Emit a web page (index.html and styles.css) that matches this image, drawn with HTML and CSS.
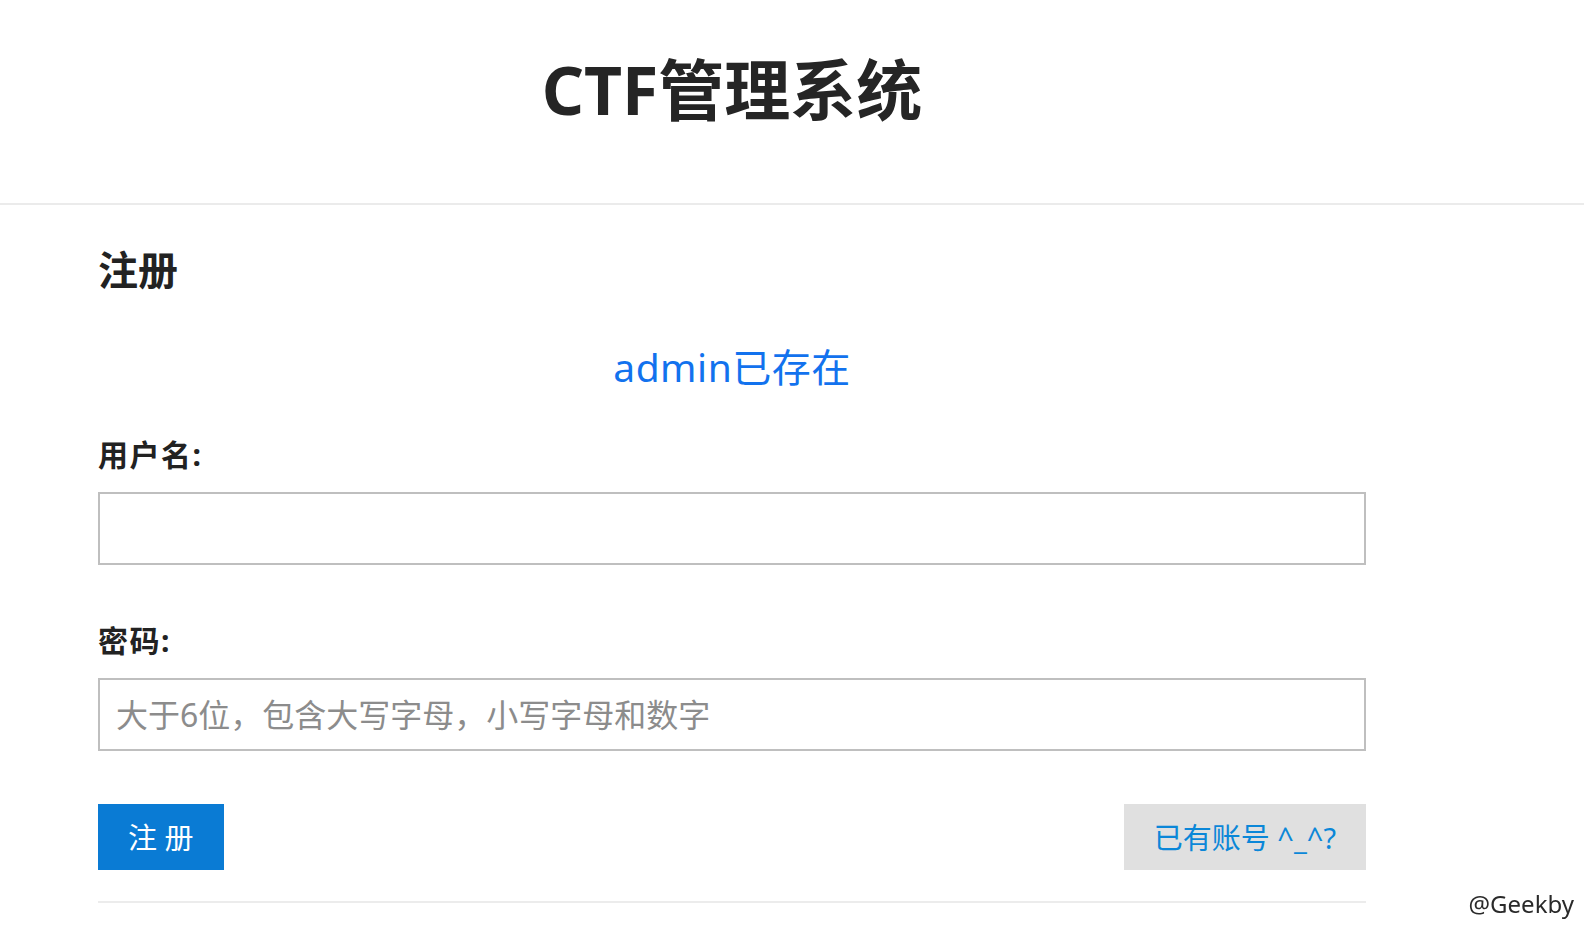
FILE: index.html
```html
<!DOCTYPE html>
<html lang="zh-CN">
<head>
<meta charset="utf-8">
<title>CTF管理系统</title>
<link rel="stylesheet" href="styles.css">
</head>
<body>
<header class="site-header">
  <div class="container">
    <h1 class="site-title">CTF管理系统</h1>
  </div>
</header>
<main class="container">
  <h2 class="page-title">注册</h2>
  <p class="message">admin已存在</p>
  <form class="form">
    <label class="field-label" for="username">用户名:</label>
    <input class="field-input" id="username" type="text">
    <label class="field-label second" for="password">密码:</label>
    <input class="field-input" id="password" type="password" placeholder="大于6位，包含大写字母，小写字母和数字">
    <div class="actions">
      <button class="btn btn-primary" type="button">注 册</button>
      <a class="btn btn-secondary" href="#">已有账号 ^_^?</a>
    </div>
  </form>
  <hr class="divider">
</main>
<div class="watermark">@Geekby</div>
</body>
</html>
```
FILE: styles.css
```css
* { box-sizing: border-box; }
html, body {
  margin: 0;
  padding: 0;
  background: #ffffff;
  font-family: "Noto Sans", "Noto Sans CJK SC", sans-serif;
  color: #222222;
}
.container {
  width: 1268px;
  margin-left: 98px;
}
.site-header {
  height: 205px;
  padding-top: 56px;
  border-bottom: 2px solid #ebebeb;
}
.site-title {
  margin: 0;
  font-size: 66px;
  line-height: 1;
  font-weight: 700;
  text-align: center;
  color: #252525;
}
.page-title {
  margin: 45px 0 0 0;
  font-size: 40px;
  line-height: 1;
  font-weight: 700;
  color: #222222;
}
.message {
  margin: 57px 0 0 0;
  font-size: 39px;
  line-height: 1;
  letter-spacing: 0.5px;
  text-align: center;
  color: #1272ee;
}
.form {
  display: flex;
  flex-direction: column;
  margin-top: 54px;
}
.field-label {
  font-size: 30px;
  line-height: 1;
  font-weight: 700;
  letter-spacing: 1.5px;
  color: #222222;
}
.field-label.second { margin-top: 61px; }
.field-input {
  margin-top: 22px;
  height: 73px;
  width: 100%;
  border: 2px solid #bfbfbf;
  border-radius: 0;
  padding: 0 16px;
  font-family: "Noto Sans", "Noto Sans CJK SC", sans-serif;
  font-size: 32px;
  color: #222222;
  background: #ffffff;
  outline: none;
}
.field-input::placeholder { color: #8c8c8c; }
.actions {
  margin-top: 53px;
  display: flex;
  justify-content: space-between;
}
.btn {
  display: flex;
  align-items: center;
  height: 66px;
  padding: 0 30px;
  border: none;
  border-radius: 0;
  font-family: "Noto Sans", "Noto Sans CJK SC", sans-serif;
  font-size: 29px;
  line-height: 1;
  text-decoration: none;
  cursor: pointer;
}
.btn-primary {
  background: #0a7bd4;
  color: #ffffff;
}
.btn-secondary {
  background: #e0e0e0;
  color: #0b87d8;
}
.divider {
  margin: 31px 0 0 0;
  border: none;
  border-top: 2px solid #ececec;
  height: 0;
}
.watermark {
  position: fixed;
  right: 10px;
  bottom: 10px;
  font-size: 24px;
  line-height: 1;
  color: #2a2a2a;
}
```
